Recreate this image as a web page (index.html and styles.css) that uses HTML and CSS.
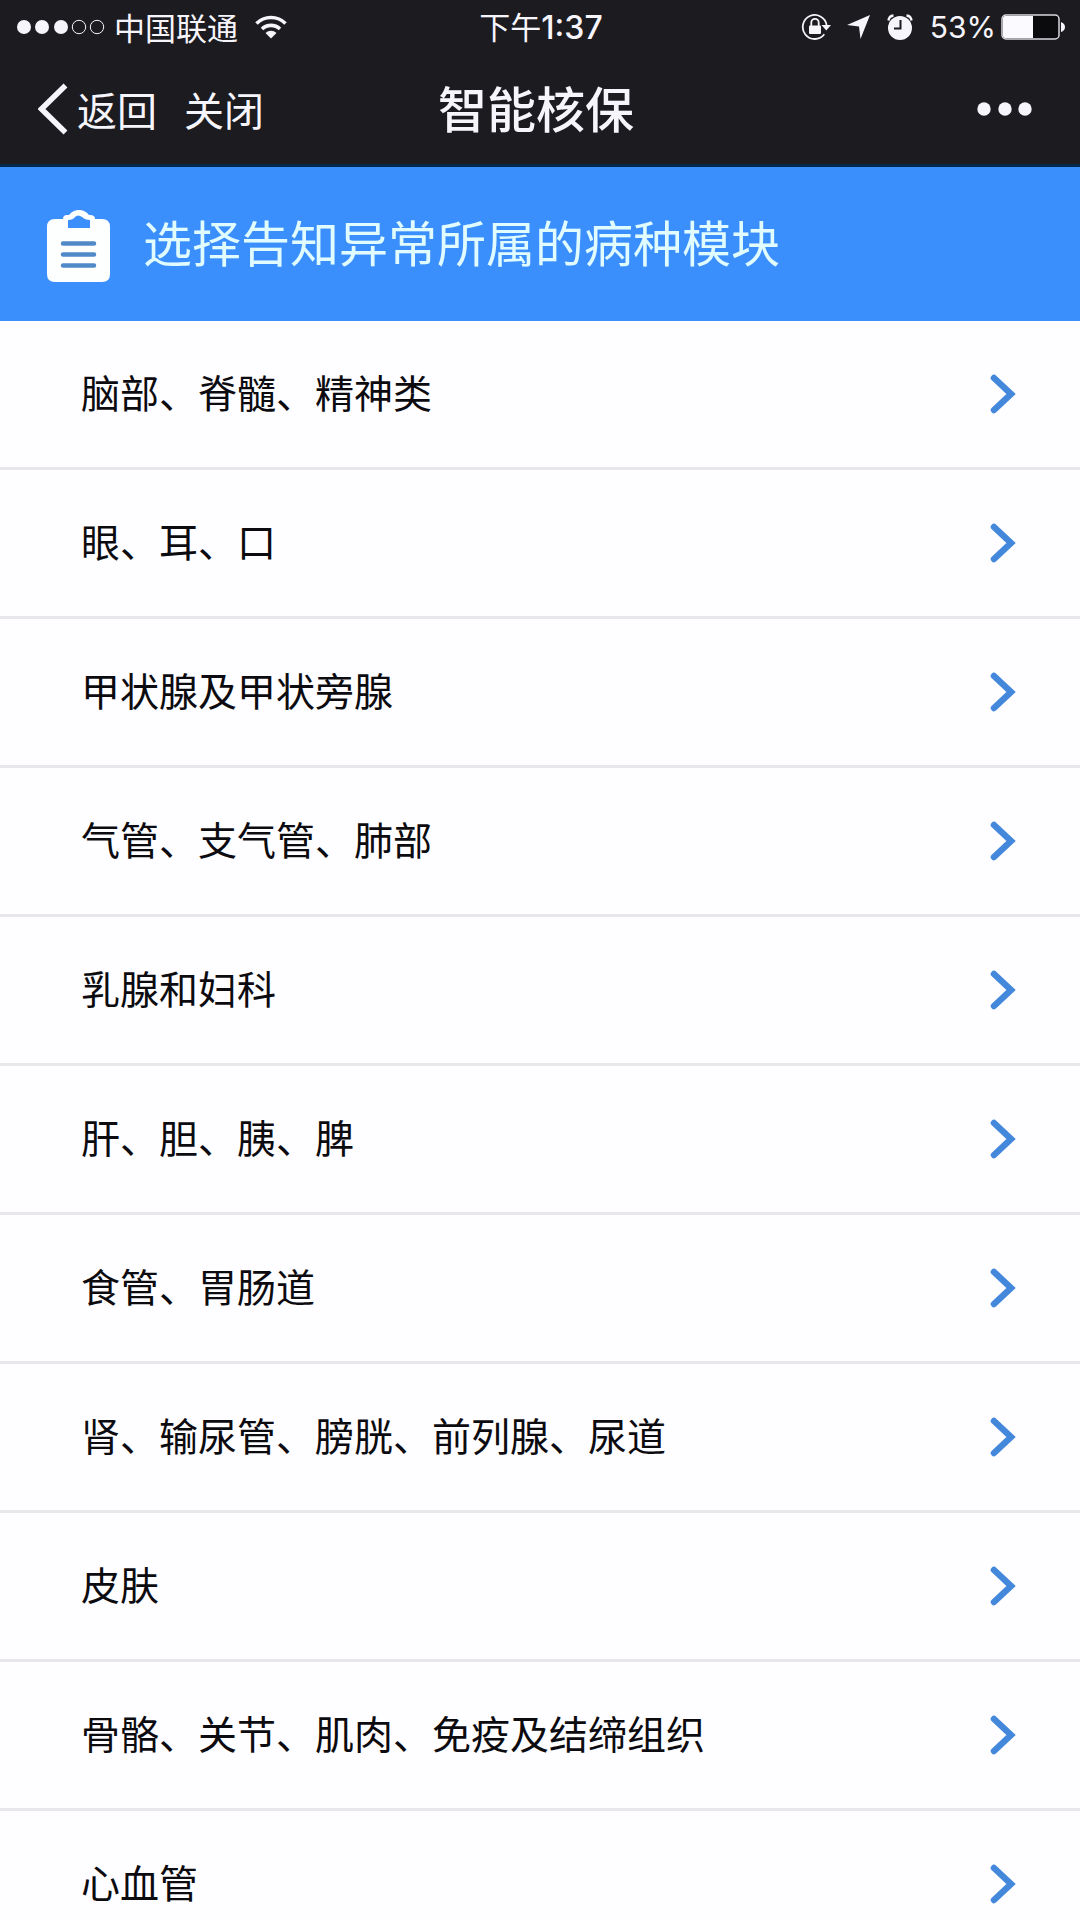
FILE: index.html
```html
<!DOCTYPE html>
<html lang="zh-CN">
	<head>
		<meta charset="UTF-8">
		<meta name="viewport" content="width=device-width">
		<title>智能核保</title>
		<link rel="stylesheet" href="styles.css">
	</head>
	<body>
		<header id="top">
			<div class="status">
				<div class="status-left">
					<svg class="signal" width="88" height="16" viewBox="0 0 88 16">
						<g fill="#f7f5fc">
							<circle cx="7" cy="8" r="7"/>
							<circle cx="25" cy="8" r="7"/>
							<circle cx="44" cy="8" r="7"/>
						</g>
						<g fill="none" stroke="#f7f5fc">
							<circle cx="62" cy="8" r="6.7"/>
							<circle cx="80" cy="8" r="6.7"/>
						</g>
					</svg>
					<span class="carrier">中国联通</span>
					<svg width="32" height="24" viewBox="0 0 32 24">
						<path d="M1.5 8.5a20.5 20.5 0 0 1 29 0M7 14a13 13 0 0 1 18 0" fill="none" stroke="#f7f5fc" stroke-width="3.6"/>
						<path d="M10.5 18a8 8 0 0 1 11 0L16 23.5z" fill="#f7f5fc"/>
					</svg>
				</div>
				<div class="time">下午<span class="num">1:37</span></div>
				<div class="status-right">
					<svg width="30" height="28" viewBox="0 0 30 28">
						<path d="M23.3 21.3A12 12 0 1 1 25.6 12" fill="none" stroke="#f7f5fc" stroke-width="1.8"/>
						<path d="M20.5 12h9.5l-4.7 5.5z" fill="#f7f5fc"/>
						<rect x="8" y="12.5" width="12" height="8.5" rx="1" fill="#f7f5fc"/>
						<path d="M10.3 13V9.500a3.700 3.700 0 0 1 7.400 0V13" fill="none" stroke="#f7f5fc" stroke-width="1.8"/>
					</svg>
					<svg class="locate" width="23" height="24" viewBox="0 0 23 24">
						<path d="M23 0L13.500 24L12 11.500L0 10z" fill="#f7f5fc"/>
					</svg>
					<svg class="alarm" width="26" height="26" viewBox="0 0 26 26">
						<circle cx="13" cy="14" r="12" fill="#f7f5fc"/>
						<path d="M1.500 6.500Q2 2 6.500 1.500M24.500 6.500Q24 2 19.500 1.500" fill="none" stroke="#f7f5fc" stroke-width="2.4"/>
						<path d="M13.500 6v8.500H7" fill="none" stroke="#1c1b20" stroke-width="2"/>
					</svg>
					<span class="num">53%</span>
					<svg class="battery" width="64" height="26" viewBox="0 0 64 26">
						<rect x="1" y="1" width="57" height="24" rx="4" fill="#0b0b0d" stroke="#d9d8dd" stroke-width="1.5"/>
						<path d="M4 2h28v22H4a2 2 0 0 1-2-2V4a2 2 0 0 1 2-2z" fill="#fbfafe"/>
						<path d="M60 8q4 1.500 4 5t-4 5z" fill="#f7f5fc"/>
					</svg>
				</div>
			</div>
			<nav class="nav">
				<div class="nav-left">
					<a href="#" class="back">
						<svg width="30" height="52" viewBox="0 0 30 52">
							<path d="M27.500 2.500L3.500 26L27.500 49.500" fill="none" stroke="#f7f5fc" stroke-width="5.5"/>
						</svg>返回</a>
					<a href="#" class="close">关闭</a>
				</div>
				<h1>智能核保</h1>
				<button type="button" class="more" aria-label="更多">
					<svg width="57" height="14" viewBox="0 0 57 14" fill="#f7f5fc">
						<circle cx="7" cy="7" r="6.7"/>
						<circle cx="28" cy="7" r="6.7"/>
						<circle cx="48" cy="7" r="6.7"/>
					</svg>
				</button>
			</nav>
		</header>
		<div id="tip">
			<svg width="64" height="72" viewBox="0 0 64 72">
				<path d="M8 9h8q0-4 4-4h2q4-5 10-5t10 5h1q5 0 5 4h7q8 0 8 8v47q0 8-8 8H8q-8 0-8-8V17Q0 9 8 9z" fill="#fdffff"/>
				<path d="M21 10q5 0 7-3q3-3 7 0q3 3 8 3v8H21z" fill="#3b8ffc"/>
				<path d="M16 33.500h31M16 44.500h31M16 55.500h31" stroke="#5089c8" stroke-width="4.5" stroke-linecap="round"/>
			</svg>
			<h2>选择告知异常所属的病种模块</h2>
		</div>
		<ul id="list">
			<li><a href="#">脑部、脊髓、精神类</a></li>
			<li><a href="#">眼、耳、口</a></li>
			<li><a href="#">甲状腺及甲状旁腺</a></li>
			<li><a href="#">气管、支气管、肺部</a></li>
			<li><a href="#">乳腺和妇科</a></li>
			<li><a href="#">肝、胆、胰、脾</a></li>
			<li><a href="#">食管、胃肠道</a></li>
			<li><a href="#">肾、输尿管、膀胱、前列腺、尿道</a></li>
			<li><a href="#">皮肤</a></li>
			<li><a href="#">骨骼、关节、肌肉、免疫及结缔组织</a></li>
			<li><a href="#">心血管</a></li>
		</ul>
		<script type="text/javascript">
			//每一行右侧的箭头
			var aLink=document.querySelectorAll('#list a');
			for(var i=0;i<aLink.length;i++){
				aLink[i].insertAdjacentHTML('beforeend','<svg width="26" height="40" viewBox="0 0 26 40"><path d="M4 4L21 20L4 36" fill="none" stroke="#4488dc" stroke-width="6.5" stroke-linecap="round"/></svg>');
			}
		</script>
	</body>
</html>
```
FILE: styles.css
```css
*{
	padding: 0px;margin: 0px;
	box-sizing: border-box;
}
body{
	background: #fefdff;
	color: #0c0b0f;
	font-family: "Noto Sans CJK SC", sans-serif;
}
ul{
	list-style: none;
}
a{
	color: inherit;
	text-decoration: none;
}
svg{
	display: block;
	flex: none;
}
#top{
	background: #1c1b20;
	color: #f7f5fc;
	border-bottom: 3px solid #04284a;
}
.status,.nav{
	display: grid;
	grid-template-columns: 1fr auto 1fr;
	align-items: center;
}
.status{
	height: 54px;
	padding: 0px 15px 2px 17px;
	font-size: 31px;
	line-height: 52px;
}
.status-left,.status-right,.nav-left,.back{
	display: flex;
	align-items: center;
}
.carrier{
	margin: 0px 17px 0px 9px;
}
.num{
	font-family: Inter, sans-serif;
	font-size: 30px;
}
.time .num{
	font-size: 32px;
	font-weight: 500;
}
.status-right{
	justify-content: flex-end;
}
.locate{
	margin-left: 16px;
}
.alarm{
	margin: 0px 17px;
}
.battery{
	margin-left: 5px;
}
.nav{
	height: 110px;
	padding: 0px 46px 0px 38px;
	font-size: 40px;
	line-height: 60px;
}
.back{
	gap: 9px;
}
.close{
	margin-left: 27px;
}
.nav h1{
	margin-bottom: 4px;
	font-size: 49px;
	font-weight: 500;
	line-height: 72px;
}
.more{
	justify-self: end;
	border: none;
	background: none;
}
#tip{
	display: flex;
	align-items: center;
	gap: 32px;
	height: 154px;
	padding: 0px 47px 6px;
	background: #3b8ffd;
}
#tip svg{
	margin-top: 10px;
}
#tip h2{
	color: #e0fcff;
	font-size: 49px;
	font-weight: 400;
	line-height: 72px;
}
#list li{
	border-bottom: 3px solid #e8e7eb;
}
#list a{
	display: flex;
	align-items: center;
	justify-content: space-between;
	height: 146px;
	padding: 0px 64px 6px 81px;
	font-size: 39px;
}
#list svg{
	margin-top: 6px;
}
```
